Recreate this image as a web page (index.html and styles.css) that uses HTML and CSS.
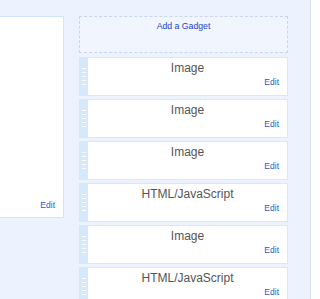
FILE: index.html
```html
<!DOCTYPE html>
<html lang="en">
<head>
    <meta charset="UTF-8">
    <link rel="stylesheet" href="styles.css">
    <title>Layout</title>
</head>
<body>
    <div class="page">
        <div class="main">
            <a class="edit">Edit</a>
        </div>
        <div class="sidebar">
            <div class="add"><a>Add a Gadget</a></div>
            <div class="gadget"><div class="handle"></div><div class="box"><p>Image</p><a class="edit">Edit</a></div></div>
            <div class="gadget"><div class="handle"></div><div class="box"><p>Image</p><a class="edit">Edit</a></div></div>
            <div class="gadget"><div class="handle"></div><div class="box"><p>Image</p><a class="edit">Edit</a></div></div>
            <div class="gadget"><div class="handle"></div><div class="box"><p>HTML/JavaScript</p><a class="edit">Edit</a></div></div>
            <div class="gadget"><div class="handle"></div><div class="box"><p>Image</p><a class="edit">Edit</a></div></div>
            <div class="gadget"><div class="handle"></div><div class="box"><p>HTML/JavaScript</p><a class="edit">Edit</a></div></div>
        </div>
    </div>
</body>
</html>
```
FILE: styles.css
```css
body {
    margin: 0;
    background-color: #ffffff;
    font-family: "Liberation Sans", Arial, sans-serif;
}
.page {
    display: flex;
    align-items: flex-start;
    width: 310px;
    height: 299px;
    overflow: hidden;
    background-color: #edf3fe;
    border-right: 1px solid #d6e6f8;
}
.main {
    width: 64px;
    height: 202px;
    margin-top: 16px;
    background-color: #ffffff;
    border: 1px solid #cfe5f8;
    border-left: none;
    display: flex;
    align-items: flex-end;
    justify-content: flex-end;
    box-sizing: border-box;
    padding: 0 8px 7px 0;
}
.edit {
    font-size: 8.5px;
    color: #3355cc;
}
.sidebar {
    margin-left: 15px;
    padding-top: 16px;
    width: 209px;
    display: flex;
    flex-direction: column;
    gap: 3px;
}
.add {
    flex-shrink: 0;
    height: 37px;
    box-sizing: border-box;
    border: 1px dashed #c9d6ef;
    background-color: #f1f5fe;
    text-align: center;
    font-size: 8.7px;
    line-height: 11px;
    padding-top: 4px;
    margin-bottom: 1px;
}
.add a {
    color: #2244cc;
}
.gadget {
    flex-shrink: 0;
    display: flex;
    height: 39px;
    border: 1px solid #d6e8f9;
    box-sizing: border-box;
    background-color: #ffffff;
}
.handle {
    width: 8px;
    background-color: #d5e9fa;
    background-image: repeating-linear-gradient(to bottom, #ffffff 0 1px, transparent 1px 4px);
    background-size: 4px 18px;
    background-position: 2px 10px;
    background-repeat: no-repeat;
}
.box {
    flex: 1;
    display: flex;
    flex-direction: column;
    padding: 3px 8px 0 0;
}
.box p {
    margin: 0;
    font-size: 12px;
    color: #555555;
    text-align: center;
    padding-left: 8px;
}
.box .edit {
    align-self: flex-end;
    margin-top: 2px;
}
```
